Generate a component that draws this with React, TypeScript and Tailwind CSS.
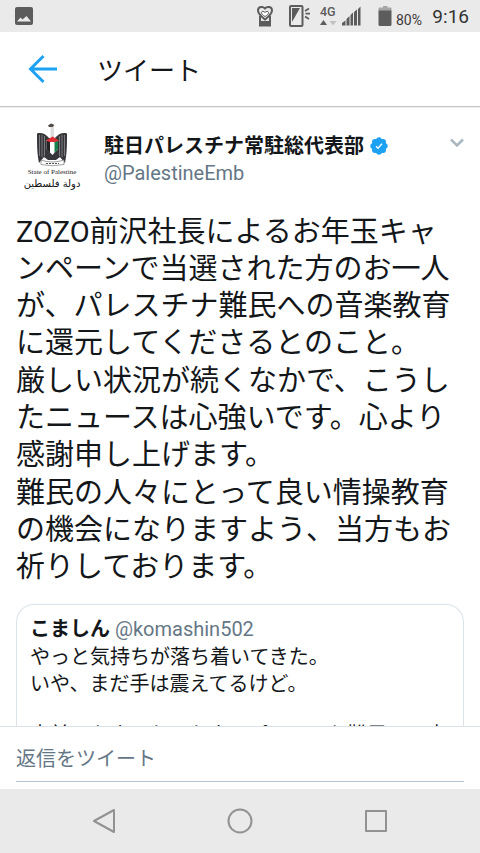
import React from "react";

const jp = "font-['Roboto','Noto_Sans_CJK_JP',sans-serif]";

function StatusBar() {
  return (
    <div className="flex h-8 shrink-0 items-center bg-[#eaeaea] pl-[15px] pr-[11px] text-[#5c5c5c]">
      <svg width="18" height="18" viewBox="0 0 18 18" aria-hidden="true">
        <rect width="18" height="18" rx="2" fill="#5c5c5c" />
        <path d="M2 14.500 5.500 10.500 7.500 12.500 11.500 9 16 14.500Z" fill="#eaeaea" />
      </svg>
      <div className="flex-1" />
      <svg width="170" height="24" viewBox="257 4 170 24" className="shrink-0" aria-hidden="true">
        <path d="M261 16V25.500H271V16" fill="none" stroke="#5c5c5c" strokeWidth="2" />
        <rect x="260" y="21" width="12" height="5" fill="#5c5c5c" />
        <path d="M266 8.500C264 6 259 6.500 259 10.500C259 14 263 17 266 19.500C269 17 273 14 273 10.500C273 6.500 268 6 266 8.500Z" fill="#eaeaea" stroke="#5c5c5c" strokeWidth="2" />
        <path d="M266 12.500C265 11 262.500 11 262.500 12.700C262.500 14 264 15.500 266 16.500C268 15.500 269.500 14 269.500 12.700C269.500 11 267 11 266 12.500Z" fill="#fff" stroke="#5c5c5c" strokeWidth="1" />
        <rect x="291" y="6" width="12.500" height="20" rx="1" fill="none" stroke="#5c5c5c" strokeWidth="2" />
        <path d="M293 8H301L293 22Z" fill="#5c5c5c" />
        <path d="M306 11 310 8.500M306.500 13.700H311M306 16.500 310 19" stroke="#5c5c5c" strokeWidth="1.800" />
        <text x="321" y="16" fontSize="12.500" fontWeight="500" fill="#5c5c5c" fontFamily="Roboto, sans-serif">4G</text>
        <path d="M321 25 324.500 20 328 25Z" fill="#5c5c5c" />
        <path d="M330.500 21H337.500L334 25.500Z" fill="#c0c0c0" />
        <path d="M343 25.500V23L346.500 20.500V25.500ZM347.500 25.500V19L350.500 16V25.500ZM351.500 25.500V15L354 12.500V25.500ZM355 25.500V12L358 9.500V25.500ZM359 25.500V9L361.500 6.500V25.500Z" fill="#5c5c5c" />
        <rect x="384" y="6" width="4.500" height="4" fill="#a6a6a6" />
        <rect x="379.500" y="7.500" width="13" height="4" rx="1" fill="#a6a6a6" />
        <path d="M379.500 10.500H392.500V24.500Q392.500 26 391 26H381Q379.500 26 379.500 24.500Z" fill="#5c5c5c" />
        <text x="397" y="25" fontSize="14" fill="#3f3838" fontFamily="Roboto, sans-serif">80%</text>
      </svg>
      <span className="ml-[6px] pt-[2px] text-[19px] leading-[30px] text-[#333333]">9:16</span>
    </div>
  );
}

function Emblem() {
  return (
    <svg width="72" height="72" viewBox="15 123 72 72" role="img" aria-label="State of Palestine" className="shrink-0">
      <path d="M48 138C45 134 40 132 36 133.500C36 145 36 153 38 163L43 157 47 160H55L59 157 64 163C66 153 66 145 66 133.500C62 132 57 134 54 138Z" fill="#37373b" />
      <path d="M38.500 135V156M41 135V157M43.500 136V156M58.500 136V156M61 135V157M63.500 135V156" stroke="#8d8d92" strokeWidth="0.800" />
      <path d="M49 125 51 123.500 53 125 53 137H49.500V128Z" fill="#ddd" />
      <path d="M47 125.500 50 123.500 53.500 125 51.500 127H48Z" fill="#514a46" />
      <path d="M45.500 140H57V149L51.500 155 45.500 149Z" fill="#fff" />
      <path d="M45.500 141H49V153L45.500 149Z" fill="#242424" />
      <path d="M53.500 141H57V149L53.500 153Z" fill="#16804c" />
      <path d="M45 140.500 51.500 136.500 58 140.500 54 142H48.500Z" fill="#df2e36" />
      <path d="M40 160Q51 164 63 160V164.500Q51 167 40 164.500Z" fill="#fff" stroke="#77777a" strokeWidth="0.700" />
      <path d="M45 163.500H58" stroke="#555" strokeWidth="1.200" strokeDasharray="2 1" />
      <text x="51" y="174" textAnchor="middle" fontSize="7" fill="#222" fontFamily="Liberation Serif, serif">State of Palestine</text>
      <text x="51" y="187" textAnchor="middle" fontSize="10" fill="#111" fontFamily="DejaVu Sans, sans-serif">دولة فلسطين</text>
    </svg>
  );
}

export default function App() {
  return (
    <div className={`flex h-screen flex-col overflow-hidden bg-white text-[#14171a] ${jp}`}>
      <StatusBar />
      <header className="z-10 flex h-[75px] shrink-0 items-center border-b border-[#c6c6c6] pl-7 shadow-[0_1px_1px_#ececec]">
        <button type="button" aria-label="戻る" className="mr-[39px]">
          <svg width="30" height="30" viewBox="0 0 30 30" fill="none" stroke="#1da1f2" strokeWidth="3" className="block" aria-hidden="true">
            <path d="M29 15H3M15.500 2 2.500 15 15.500 28" />
          </svg>
        </button>
        <h1 className="pt-[3px] text-[26px] leading-8">ツイート</h1>
      </header>

      <main className="min-h-0 flex-1 overflow-hidden px-4">
        <article>
          <div className="flex pt-4">
            <Emblem />
            <div className="ml-4 min-w-0 flex-1 pt-2 text-[20px] leading-7">
              <div className="flex items-center pt-px">
                <span className="font-bold">駐日パレスチナ常駐総代表部</span>
                <svg width="18" height="18" viewBox="0 0 18 18" className="ml-[6px]" role="img" aria-label="認証済み">
                  <g fill="#1da1f2">
                    <circle cx="9" cy="9" r="7.500" />
                    <circle cx="9" cy="3" r="2.700" />
                    <circle cx="9" cy="15" r="2.700" />
                    <circle cx="3" cy="9" r="2.700" />
                    <circle cx="15" cy="9" r="2.700" />
                    <circle cx="4.800" cy="4.800" r="2.700" />
                    <circle cx="13.200" cy="4.800" r="2.700" />
                    <circle cx="4.800" cy="13.200" r="2.700" />
                    <circle cx="13.200" cy="13.200" r="2.700" />
                  </g>
                  <path d="M6 9.300 8 11.300 12 6.800" fill="none" stroke="#fff" strokeWidth="1.300" />
                </svg>
              </div>
              <div className="leading-[27px] text-[#657786]">@PalestineEmb</div>
            </div>
            <button type="button" aria-label="メニュー" className="mt-[15px] self-start">
              <svg width="14" height="10" viewBox="0 0 14 10" fill="none" stroke="#aab8c2" strokeWidth="2.500" className="block" aria-hidden="true">
                <path d="M1 1.500 7 7.500 13 1.500" />
              </svg>
            </button>
          </div>

          <div className="mt-[19px] flex flex-col gap-px text-[29px] leading-[37px]">
            <p>ZOZO前沢社長によるお年玉キャンペーンで当選された方のお一人が、パレスチナ難民への音楽教育に還元してくださるとのこと。</p>
            <p>厳しい状況が続くなかで、こうしたニュースは心強いです。心より感謝申し上げます。</p>
            <p>難民の人々にとって良い情操教育の機会になりますよう、当方もお祈りしております。</p>
          </div>

          <section className="mt-[18px] rounded-t-[18px] border border-b-0 border-[#dbe3e9] px-[13px] pt-[11px] text-[20px] leading-[27px]">
            <div className="pb-px">
              <span className="font-bold">こましん</span>{" "}
              <span className="text-[#657786]">@komashin502</span>
            </div>
            <p>やっと気持ちが落ち着いてきた。</p>
            <p>いや、まだ手は震えてるけど。</p>
            <p className="mt-6 whitespace-nowrap">支前にたまった、たまのプレーでも難民への支</p>
          </section>
        </article>
      </main>

      <div className="h-[63px] shrink-0 border-t border-[#dbe3e9] px-4">
        <input
          aria-label="返信をツイート"
          placeholder="返信をツイート"
          className="block h-[55px] w-full border-b border-[#b8c5d0] pt-[10px] text-[20px] outline-none placeholder:text-[#657786]"
        />
      </div>

      <nav className="flex h-16 shrink-0 items-center justify-around bg-[#eaeaea] px-9">
        <button type="button" aria-label="戻る">
          <svg width="26" height="26" viewBox="0 0 26 26" fill="none" stroke="#929292" strokeWidth="2" strokeLinejoin="round" className="block" aria-hidden="true">
            <path d="M23 2V24L3 13Z" />
          </svg>
        </button>
        <button type="button" aria-label="ホーム">
          <svg width="26" height="26" viewBox="0 0 26 26" fill="none" stroke="#929292" strokeWidth="2" className="block" aria-hidden="true">
            <circle cx="13" cy="13" r="11.500" />
          </svg>
        </button>
        <button type="button" aria-label="アプリ履歴">
          <svg width="26" height="26" viewBox="0 0 26 26" fill="none" stroke="#929292" strokeWidth="2" strokeLinejoin="round" className="block" aria-hidden="true">
            <rect x="3" y="3" width="20" height="20" />
          </svg>
        </button>
      </nav>
    </div>
  );
}
